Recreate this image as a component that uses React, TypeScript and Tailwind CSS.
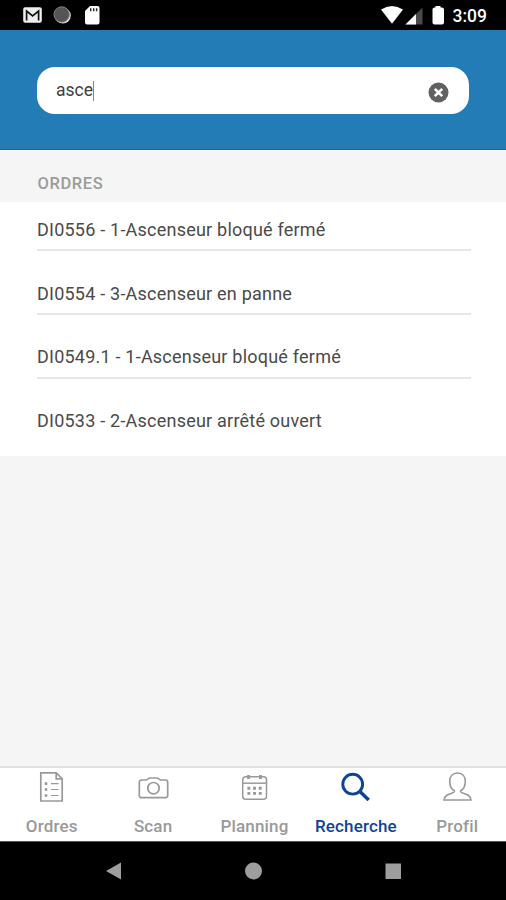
import React from "react";

const orders = [
  { label: "DI0556 - 1-Ascenseur bloqué fermé", box: "h-[49px] pb-[8px]" },
  { label: "DI0554 - 3-Ascenseur en panne", box: "h-[64px] pb-[8px]" },
  { label: "DI0549.1 - 1-Ascenseur bloqué fermé", box: "h-[64px] pb-[9px]" },
  { label: "DI0533 - 2-Ascenseur arrêté ouvert", box: "h-[77px] pb-[24px]" },
];

function StatusBar() {
  return (
    <div className="flex h-[30px] shrink-0 items-center justify-between bg-black text-white">
      <svg width="110" height="30" viewBox="0 0 110 30">
        <rect x="23.200" y="7.200" width="18.600" height="15.600" rx="2" fill="#eee" />
        <path d="M26.600 20.500V11l6 5 6-5v9.500" fill="none" stroke="#111" strokeWidth="1.700" />
        <circle cx="62.800" cy="15.600" r="8" fill="#ddd" />
        <circle cx="61.700" cy="14.500" r="7.700" fill="#555" stroke="#858585" strokeWidth="1" />
        <path d="M90 6h7.500a2 2 0 0 1 2 2v14.500a2 2 0 0 1-2 2H87a2 2 0 0 1-2-2V11z" fill="#fff" />
        <path d="M90.700 8.300v3M93.700 8.300v3M96.600 8.300v3" stroke="#222" strokeWidth="1.400" />
      </svg>
      <div className="flex items-center">
        <svg width="72" height="30" viewBox="380 0 72 30">
          <path d="M381 9.500Q392 2.500 403 9.500L392 23.700z" fill="#fff" />
          <path d="M422.500 7.500v17h-17z" fill="#4a4a4a" />
          <path d="M416 14v10.500h-10.500z" fill="#fff" />
          <path d="M435.500 7.500V6h5v1.500h1.500a2 2 0 0 1 2 2v13a2 2 0 0 1-2 2h-7.500a2 2 0 0 1-2-2v-13a2 2 0 0 1 2-2z" fill="#fff" />
        </svg>
        <span className="w-[54px] pt-[2px] pl-[0.5px] text-[17.5px] leading-[28px] font-medium">3:09</span>
      </div>
    </div>
  );
}

const tabs = [
  {
    label: "Ordres",
    icon: (
      <g strokeWidth="1.700">
        <path d="M4.800 0.900h15.400l6 6V29H4.800z" />
        <path d="M20.200 0.900v6h6" />
        <path d="M15 11.600h7.500M15 17.500h7.500M15 23.500h7.500" strokeWidth="1.200" />
        <path d="M8.700 11.600h2.600M8.700 17.500h2.600M8.700 23.500h2.600" strokeWidth="2.600" />
      </g>
    ),
  },
  {
    label: "Scan",
    icon: (
      <g strokeWidth="1.700">
        <path d="M3.500 8h4.500c2 0 2-2 4-2h7c2 0 2 2 4 2h4.500a2.200 2.200 0 0 1 2.200 2.200V23.500a2.200 2.200 0 0 1-2.200 2.200h-24A2.200 2.200 0 0 1 1.300 23.500V10.200a2.200 2.200 0 0 1 2.200-2.200z" />
        <circle cx="15.500" cy="16.200" r="5.700" />
      </g>
    ),
  },
  {
    label: "Planning",
    icon: (
      <g strokeWidth="1.500">
        <rect x="3.700" y="4.700" width="23.800" height="22.500" rx="3" />
        <path d="M3.500 11.200h24" />
        <path d="M9.500 3v4M21.500 3v4" strokeWidth="2.800" />
        <path d="M8.400 16.300h2.900M14.100 16.300H17M19.800 16.300h2.900M8.400 21.400h2.900M14.100 21.400H17M19.800 21.400h2.900" strokeWidth="2.900" />
      </g>
    ),
  },
  {
    label: "Recherche",
    icon: (
      <g strokeWidth="2.900">
        <circle cx="12.700" cy="12.200" r="9.900" />
        <path d="M19.700 19.200l9 8.700" strokeWidth="3.500" />
      </g>
    ),
  },
  {
    label: "Profil",
    icon: (
      <path
        strokeWidth="1.600"
        d="M12.500 19C9.500 17.300 7.700 14 7.700 9.300c0-5 3-8.300 7.800-8.300s7.800 3.300 7.800 8.300c0 4.700-1.800 8-4.800 9.700c0 1.200.8 1.600 2.800 2.300c4 1.300 7.300 2.400 7.700 6.700H2c.4-4.300 3.700-5.400 7.700-6.700c2-.7 2.800-1.100 2.800-2.300z"
      />
    ),
  },
];

export default function App() {
  return (
    <div className="flex h-[900px] w-[506px] flex-col overflow-hidden bg-[#f5f5f5] font-[Roboto,sans-serif]">
      <StatusBar />
      <header className="h-[120px] shrink-0 border-b border-[#0d68ad] bg-[#247cb7] px-[37px] pt-[37px]">
        <div className="flex h-[47px] w-[432px] items-center justify-between rounded-[18px] bg-white pr-[20px] pl-[19px]">
          <div className="flex h-[20px] items-center">
            <span className="-mt-[2px] text-[17.5px] leading-[20px] text-[#404040]">asce</span>
            <span className="h-[20px] w-px bg-[#888]" />
          </div>
          <svg className="mt-[4px]" width="21" height="21" viewBox="0 0 21 21">
            <circle cx="10.500" cy="10.500" r="10" fill="#616161" />
            <path d="M6.800 6.800l7.400 7.400M14.200 6.800l-7.400 7.400" stroke="#fff" strokeWidth="2.600" />
          </svg>
        </div>
      </header>
      <h2 className="h-[52px] shrink-0 pt-[23px] pl-[37.5px] text-[16.5px] leading-[22px] font-medium tracking-[0.6px] text-[#9c9c9c]">
        ORDRES
      </h2>
      <ul className="shrink-0 bg-white pr-[35px] pl-[37px]">
        {orders.map((o, i) => (
          <li
            key={o.label}
            className={`flex items-end text-[18px] leading-[22px] tracking-[0.22px] text-[#4a4a4a] ${o.box} ${
              i < 3 ? "border-b-2 border-[#e6e6e6]" : ""
            }`}
          >
            <span>{o.label}</span>
          </li>
        ))}
      </ul>
      <div className="flex-1" />
      <nav className="grid h-[75px] w-[508px] shrink-0 grid-cols-5 border-t-2 border-[#e0e0e0] bg-white pl-[1px]">
        {tabs.map((t) => {
          const active = t.label === "Recherche";
          return (
            <div
              key={t.label}
              className={`flex flex-col items-center pt-[4px] ${active ? "text-[#0b4594]" : "text-[#999]"}`}
            >
              <svg width="31" height="31" viewBox="0 0 31 31" fill="none" stroke="currentColor">
                {t.icon}
              </svg>
              <span className="mt-[13px] text-[17px] leading-[20px] font-medium tracking-[0.15px]">{t.label}</span>
            </div>
          );
        })}
      </nav>
      <div className="h-[59px] shrink-0 border-t border-[#555] bg-black">
        <svg width="506" height="58" viewBox="0 842 506 58" fill="#9e9e9e">
          <path d="M106 871l15-8.500v17z" />
          <circle cx="253.500" cy="871" r="8.500" />
          <rect x="385.500" y="863.500" width="15.500" height="15.500" />
        </svg>
      </div>
    </div>
  );
}
